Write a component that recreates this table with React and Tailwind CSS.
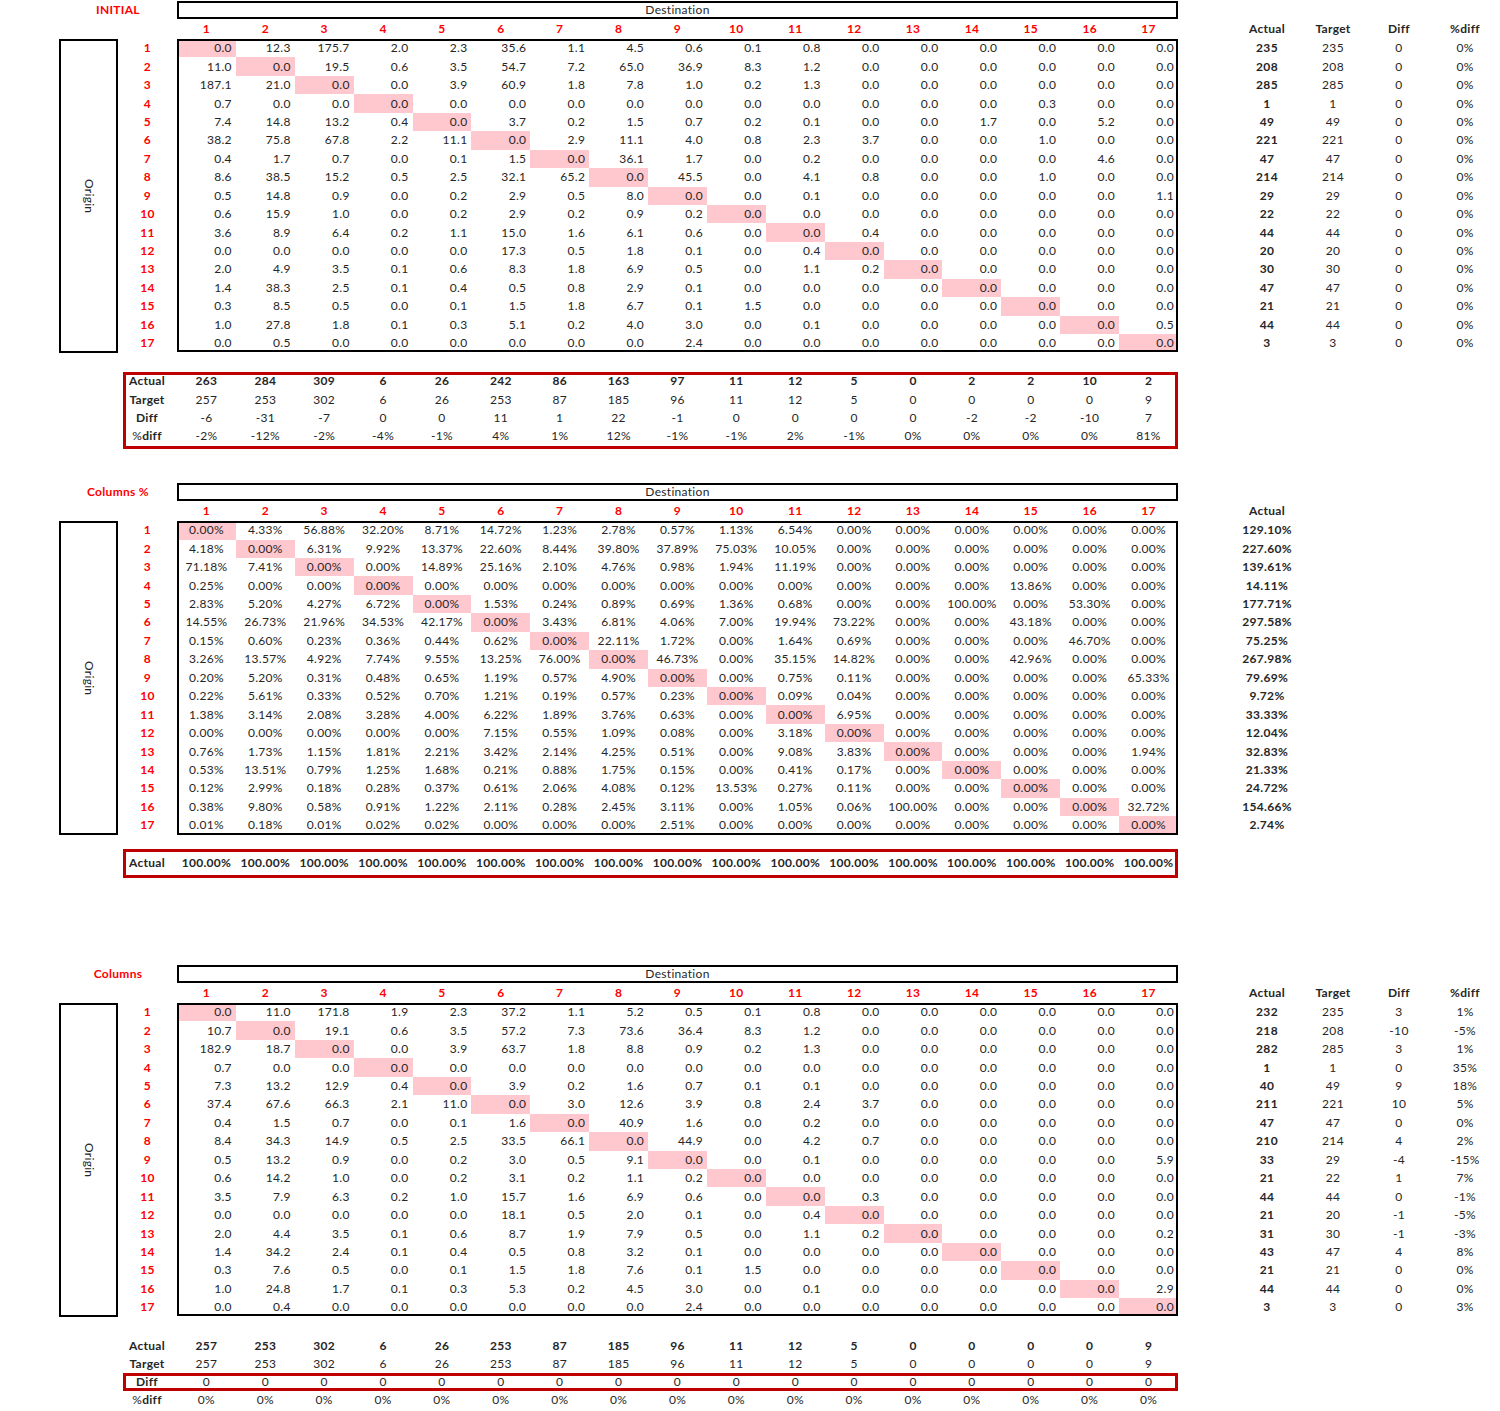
import React from 'react'

const split = (s) => s.trim().split(/\s+/)

// INITIAL matrix
const initial = [
  '0.0 12.3 175.7 2.0 2.3 35.6 1.1 4.5 0.6 0.1 0.8 0.0 0.0 0.0 0.0 0.0 0.0',
  '11.0 0.0 19.5 0.6 3.5 54.7 7.2 65.0 36.9 8.3 1.2 0.0 0.0 0.0 0.0 0.0 0.0',
  '187.1 21.0 0.0 0.0 3.9 60.9 1.8 7.8 1.0 0.2 1.3 0.0 0.0 0.0 0.0 0.0 0.0',
  '0.7 0.0 0.0 0.0 0.0 0.0 0.0 0.0 0.0 0.0 0.0 0.0 0.0 0.0 0.3 0.0 0.0',
  '7.4 14.8 13.2 0.4 0.0 3.7 0.2 1.5 0.7 0.2 0.1 0.0 0.0 1.7 0.0 5.2 0.0',
  '38.2 75.8 67.8 2.2 11.1 0.0 2.9 11.1 4.0 0.8 2.3 3.7 0.0 0.0 1.0 0.0 0.0',
  '0.4 1.7 0.7 0.0 0.1 1.5 0.0 36.1 1.7 0.0 0.2 0.0 0.0 0.0 0.0 4.6 0.0',
  '8.6 38.5 15.2 0.5 2.5 32.1 65.2 0.0 45.5 0.0 4.1 0.8 0.0 0.0 1.0 0.0 0.0',
  '0.5 14.8 0.9 0.0 0.2 2.9 0.5 8.0 0.0 0.0 0.1 0.0 0.0 0.0 0.0 0.0 1.1',
  '0.6 15.9 1.0 0.0 0.2 2.9 0.2 0.9 0.2 0.0 0.0 0.0 0.0 0.0 0.0 0.0 0.0',
  '3.6 8.9 6.4 0.2 1.1 15.0 1.6 6.1 0.6 0.0 0.0 0.4 0.0 0.0 0.0 0.0 0.0',
  '0.0 0.0 0.0 0.0 0.0 17.3 0.5 1.8 0.1 0.0 0.4 0.0 0.0 0.0 0.0 0.0 0.0',
  '2.0 4.9 3.5 0.1 0.6 8.3 1.8 6.9 0.5 0.0 1.1 0.2 0.0 0.0 0.0 0.0 0.0',
  '1.4 38.3 2.5 0.1 0.4 0.5 0.8 2.9 0.1 0.0 0.0 0.0 0.0 0.0 0.0 0.0 0.0',
  '0.3 8.5 0.5 0.0 0.1 1.5 1.8 6.7 0.1 1.5 0.0 0.0 0.0 0.0 0.0 0.0 0.0',
  '1.0 27.8 1.8 0.1 0.3 5.1 0.2 4.0 3.0 0.0 0.1 0.0 0.0 0.0 0.0 0.0 0.5',
  '0.0 0.5 0.0 0.0 0.0 0.0 0.0 0.0 2.4 0.0 0.0 0.0 0.0 0.0 0.0 0.0 0.0',
].map(split)

const initialRight = [
  '235 235 0 0%', '208 208 0 0%', '285 285 0 0%', '1 1 0 0%', '49 49 0 0%', '221 221 0 0%',
  '47 47 0 0%', '214 214 0 0%', '29 29 0 0%', '22 22 0 0%', '44 44 0 0%', '20 20 0 0%',
  '30 30 0 0%', '47 47 0 0%', '21 21 0 0%', '44 44 0 0%', '3 3 0 0%',
].map(split)

const initialSummary = [
  ['Actual', split('263 284 309 6 26 242 86 163 97 11 12 5 0 2 2 10 2')],
  ['Target', split('257 253 302 6 26 253 87 185 96 11 12 5 0 0 0 0 9')],
  ['Diff', split('-6 -31 -7 0 0 11 1 22 -1 0 0 0 0 -2 -2 -10 7')],
  ['%diff', split('-2% -12% -2% -4% -1% 4% 1% 12% -1% -1% 2% -1% 0% 0% 0% 0% 81%')],
]

// Columns % matrix
const percent = [
  '0.00% 4.33% 56.88% 32.20% 8.71% 14.72% 1.23% 2.78% 0.57% 1.13% 6.54% 0.00% 0.00% 0.00% 0.00% 0.00% 0.00%',
  '4.18% 0.00% 6.31% 9.92% 13.37% 22.60% 8.44% 39.80% 37.89% 75.03% 10.05% 0.00% 0.00% 0.00% 0.00% 0.00% 0.00%',
  '71.18% 7.41% 0.00% 0.00% 14.89% 25.16% 2.10% 4.76% 0.98% 1.94% 11.19% 0.00% 0.00% 0.00% 0.00% 0.00% 0.00%',
  '0.25% 0.00% 0.00% 0.00% 0.00% 0.00% 0.00% 0.00% 0.00% 0.00% 0.00% 0.00% 0.00% 0.00% 13.86% 0.00% 0.00%',
  '2.83% 5.20% 4.27% 6.72% 0.00% 1.53% 0.24% 0.89% 0.69% 1.36% 0.68% 0.00% 0.00% 100.00% 0.00% 53.30% 0.00%',
  '14.55% 26.73% 21.96% 34.53% 42.17% 0.00% 3.43% 6.81% 4.06% 7.00% 19.94% 73.22% 0.00% 0.00% 43.18% 0.00% 0.00%',
  '0.15% 0.60% 0.23% 0.36% 0.44% 0.62% 0.00% 22.11% 1.72% 0.00% 1.64% 0.69% 0.00% 0.00% 0.00% 46.70% 0.00%',
  '3.26% 13.57% 4.92% 7.74% 9.55% 13.25% 76.00% 0.00% 46.73% 0.00% 35.15% 14.82% 0.00% 0.00% 42.96% 0.00% 0.00%',
  '0.20% 5.20% 0.31% 0.48% 0.65% 1.19% 0.57% 4.90% 0.00% 0.00% 0.75% 0.11% 0.00% 0.00% 0.00% 0.00% 65.33%',
  '0.22% 5.61% 0.33% 0.52% 0.70% 1.21% 0.19% 0.57% 0.23% 0.00% 0.09% 0.04% 0.00% 0.00% 0.00% 0.00% 0.00%',
  '1.38% 3.14% 2.08% 3.28% 4.00% 6.22% 1.89% 3.76% 0.63% 0.00% 0.00% 6.95% 0.00% 0.00% 0.00% 0.00% 0.00%',
  '0.00% 0.00% 0.00% 0.00% 0.00% 7.15% 0.55% 1.09% 0.08% 0.00% 3.18% 0.00% 0.00% 0.00% 0.00% 0.00% 0.00%',
  '0.76% 1.73% 1.15% 1.81% 2.21% 3.42% 2.14% 4.25% 0.51% 0.00% 9.08% 3.83% 0.00% 0.00% 0.00% 0.00% 1.94%',
  '0.53% 13.51% 0.79% 1.25% 1.68% 0.21% 0.88% 1.75% 0.15% 0.00% 0.41% 0.17% 0.00% 0.00% 0.00% 0.00% 0.00%',
  '0.12% 2.99% 0.18% 0.28% 0.37% 0.61% 2.06% 4.08% 0.12% 13.53% 0.27% 0.11% 0.00% 0.00% 0.00% 0.00% 0.00%',
  '0.38% 9.80% 0.58% 0.91% 1.22% 2.11% 0.28% 2.45% 3.11% 0.00% 1.05% 0.06% 100.00% 0.00% 0.00% 0.00% 32.72%',
  '0.01% 0.18% 0.01% 0.02% 0.02% 0.00% 0.00% 0.00% 2.51% 0.00% 0.00% 0.00% 0.00% 0.00% 0.00% 0.00% 0.00%',
].map(split)

const percentRight = split(
  '129.10% 227.60% 139.61% 14.11% 177.71% 297.58% 75.25% 267.98% 79.69% 9.72% 33.33% 12.04% 32.83% 21.33% 24.72% 154.66% 2.74%'
).map((v) => [v])

const percentSummary = [['Actual', Array(17).fill('100.00%')]]

// Columns matrix
const columns = [
  '0.0 11.0 171.8 1.9 2.3 37.2 1.1 5.2 0.5 0.1 0.8 0.0 0.0 0.0 0.0 0.0 0.0',
  '10.7 0.0 19.1 0.6 3.5 57.2 7.3 73.6 36.4 8.3 1.2 0.0 0.0 0.0 0.0 0.0 0.0',
  '182.9 18.7 0.0 0.0 3.9 63.7 1.8 8.8 0.9 0.2 1.3 0.0 0.0 0.0 0.0 0.0 0.0',
  '0.7 0.0 0.0 0.0 0.0 0.0 0.0 0.0 0.0 0.0 0.0 0.0 0.0 0.0 0.0 0.0 0.0',
  '7.3 13.2 12.9 0.4 0.0 3.9 0.2 1.6 0.7 0.1 0.1 0.0 0.0 0.0 0.0 0.0 0.0',
  '37.4 67.6 66.3 2.1 11.0 0.0 3.0 12.6 3.9 0.8 2.4 3.7 0.0 0.0 0.0 0.0 0.0',
  '0.4 1.5 0.7 0.0 0.1 1.6 0.0 40.9 1.6 0.0 0.2 0.0 0.0 0.0 0.0 0.0 0.0',
  '8.4 34.3 14.9 0.5 2.5 33.5 66.1 0.0 44.9 0.0 4.2 0.7 0.0 0.0 0.0 0.0 0.0',
  '0.5 13.2 0.9 0.0 0.2 3.0 0.5 9.1 0.0 0.0 0.1 0.0 0.0 0.0 0.0 0.0 5.9',
  '0.6 14.2 1.0 0.0 0.2 3.1 0.2 1.1 0.2 0.0 0.0 0.0 0.0 0.0 0.0 0.0 0.0',
  '3.5 7.9 6.3 0.2 1.0 15.7 1.6 6.9 0.6 0.0 0.0 0.3 0.0 0.0 0.0 0.0 0.0',
  '0.0 0.0 0.0 0.0 0.0 18.1 0.5 2.0 0.1 0.0 0.4 0.0 0.0 0.0 0.0 0.0 0.0',
  '2.0 4.4 3.5 0.1 0.6 8.7 1.9 7.9 0.5 0.0 1.1 0.2 0.0 0.0 0.0 0.0 0.2',
  '1.4 34.2 2.4 0.1 0.4 0.5 0.8 3.2 0.1 0.0 0.0 0.0 0.0 0.0 0.0 0.0 0.0',
  '0.3 7.6 0.5 0.0 0.1 1.5 1.8 7.6 0.1 1.5 0.0 0.0 0.0 0.0 0.0 0.0 0.0',
  '1.0 24.8 1.7 0.1 0.3 5.3 0.2 4.5 3.0 0.0 0.1 0.0 0.0 0.0 0.0 0.0 2.9',
  '0.0 0.4 0.0 0.0 0.0 0.0 0.0 0.0 2.4 0.0 0.0 0.0 0.0 0.0 0.0 0.0 0.0',
].map(split)

const columnsRight = [
  '232 235 3 1%', '218 208 -10 -5%', '282 285 3 1%', '1 1 0 35%', '40 49 9 18%', '211 221 10 5%',
  '47 47 0 0%', '210 214 4 2%', '33 29 -4 -15%', '21 22 1 7%', '44 44 0 -1%', '21 20 -1 -5%',
  '31 30 -1 -3%', '43 47 4 8%', '21 21 0 0%', '44 44 0 0%', '3 3 0 3%',
].map(split)

const colTotals = split('257 253 302 6 26 253 87 185 96 11 12 5 0 0 0 0 9')
const columnsSummary = [
  ['Actual', colTotals],
  ['Target', colTotals],
  ['Diff', Array(17).fill('0')],
  ['%diff', Array(17).fill('0%')],
]

const nums = Array.from({ length: 17 }, (_, i) => i + 1)

function TitleRow({ label, className = '' }) {
  return (
    <div className={`flex items-center ${className}`}>
      <div className="w-[59px]" />
      <div className="w-[118px] text-center font-bold text-[#ff0000]">{label}</div>
      <div className="w-[1001px] h-[18px] border-2 border-black flex items-center justify-center">
        Destination
      </div>
    </div>
  )
}

function HeaderRow({ right }) {
  return (
    <div className="flex items-center h-[20px]">
      <div className="w-[177px]" />
      <div className="w-[1001px] grid grid-cols-[repeat(17,minmax(0,1fr))] font-bold text-[#ff0000]">
        {nums.map((n) => (
          <div key={n} className="text-center">{n}</div>
        ))}
      </div>
      <div className="w-[56px]" />
      {right.map((h) => (
        <div key={h} className="w-[66px] text-center font-bold">{h}</div>
      ))}
    </div>
  )
}

function Matrix({ data, right, pct }) {
  return (
    <div className="flex items-start">
      <div className="w-[59px]" />
      <div className="w-[59px] h-[313.5px] border-2 border-black flex items-center justify-center">
        <span className="[writing-mode:vertical-rl]">Origin</span>
      </div>
      <div className="w-[59px] flex flex-col font-bold text-[#ff0000]">
        {nums.map((n) => (
          <div key={n} className="h-[18.44px] flex items-center justify-center">{n}</div>
        ))}
      </div>
      <div className="w-[1001px] flex flex-col outline-2 outline-solid outline-black outline-offset-[-2px]">
        {data.map((row, i) => (
          <div key={i} className="grid grid-cols-[repeat(17,minmax(0,1fr))]">
            {row.map((v, j) => (
              <div
                key={j}
                className={`h-[18.44px] flex items-center ${pct ? 'justify-center' : 'justify-end pr-[4px]'} ${i === j ? 'bg-[#ffc7ce]' : ''}`}
              >
                {v}
              </div>
            ))}
          </div>
        ))}
      </div>
      <div className="w-[56px]" />
      <div className="flex flex-col">
        {right.map((row, i) => (
          <div key={i} className="flex h-[18.44px] items-center">
            {row.map((v, j) => (
              <div key={j} className={`w-[66px] text-center ${j === 0 ? 'font-bold' : ''}`}>{v}</div>
            ))}
          </div>
        ))}
      </div>
    </div>
  )
}

function Label({ text }) {
  if (text === '%diff') {
    return (
      <>
        <span className="font-normal">%</span>diff
      </>
    )
  }
  return text
}

function SummaryRow({ label, values, h = 'h-[18.4px]', boxed }) {
  return (
    <div
      className={`flex items-center ${h} ${boxed ? 'outline-3 outline-solid outline-[#c00000] outline-offset-[-3px]' : ''}`}
    >
      <div className="w-[54px] pr-[6px] text-center font-bold">
        <Label text={label} />
      </div>
      <div className="w-[1001px] grid grid-cols-[repeat(17,minmax(0,1fr))]">
        {values.map((v, i) => (
          <div key={i} className={`text-center ${label === 'Actual' ? 'font-bold' : ''}`}>{v}</div>
        ))}
      </div>
    </div>
  )
}

export default function App() {
  return (
    <div
      className="w-[1500px] min-h-[1411px] bg-white text-[#262626] text-[12px] tracking-[0.3px] leading-none"
      style={{ fontFamily: 'Lato, "Liberation Sans", sans-serif' }}
    >
      {/* INITIAL */}
      <TitleRow label="INITIAL" className="pt-[1px]" />
      <HeaderRow right={['Actual', 'Target', 'Diff', '%diff']} />
      <Matrix data={initial} right={initialRight} />
      <div className="ml-[123px] w-[1055px] mt-[19.5px] pb-[3.5px] outline-3 outline-solid outline-[#c00000] outline-offset-[-3px]">
        {initialSummary.map(([l, v]) => (
          <SummaryRow key={l} label={l} values={v} />
        ))}
      </div>

      {/* Columns % */}
      <TitleRow label="Columns %" className="mt-[34px]" />
      <HeaderRow right={['Actual']} />
      <Matrix data={percent} right={percentRight} pct />
      <div className="ml-[123px] w-[1055px] mt-[14.5px] pt-[5px] pb-[5.6px] outline-3 outline-solid outline-[#c00000] outline-offset-[-3px]">
        {percentSummary.map(([l, v]) => (
          <SummaryRow key={l} label={l} values={v} />
        ))}
      </div>

      {/* Columns */}
      <TitleRow label="Columns" className="mt-[87px]" />
      <HeaderRow right={['Actual', 'Target', 'Diff', '%diff']} />
      <Matrix data={columns} right={columnsRight} />
      <div className="ml-[123px] w-[1055px] mt-[20.3px]">
        {columnsSummary.map(([l, v]) => (
          <SummaryRow key={l} label={l} values={v} h="h-[18px]" boxed={l === 'Diff'} />
        ))}
      </div>
    </div>
  )
}
